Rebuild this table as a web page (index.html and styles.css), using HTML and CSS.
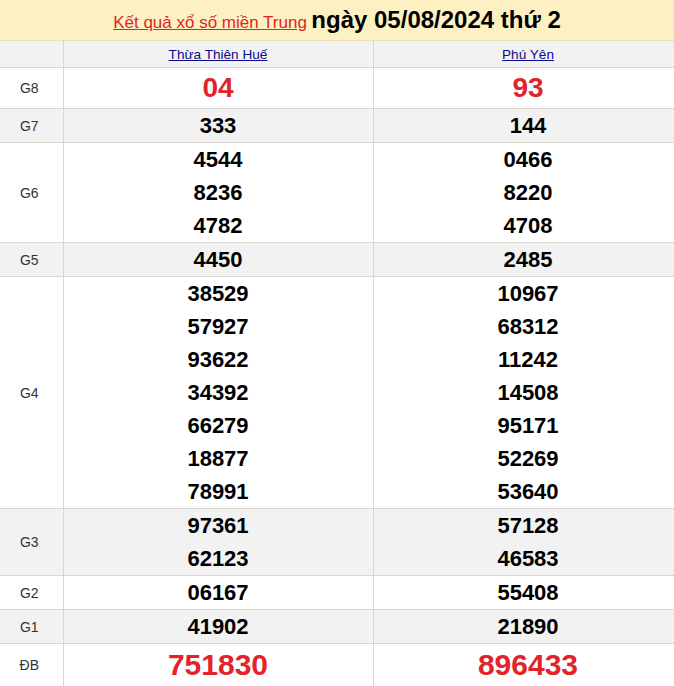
FILE: index.html
```html
<!DOCTYPE html>
<html lang="vi">
<head>
<meta charset="utf-8">
<title>Kết quả xổ số miền Trung</title>
<link rel="stylesheet" href="styles.css">
</head>
<body>
<div class="wrap">
  <div class="title">
    <a href="#" class="title-link">Kết quả xổ số miền Trung</a> <span class="title-date">ngày 05/08/2024 thứ 2</span>
  </div>
  <table class="kq">
    <colgroup>
      <col class="c-label">
      <col class="c-prov">
      <col class="c-prov">
    </colgroup>
    <thead>
      <tr class="head">
        <th></th>
        <th><a href="#">Thừa Thiên Huế</a></th>
        <th><a href="#">Phú Yên</a></th>
      </tr>
    </thead>
    <tbody>
      <tr class="g8">
        <td class="lbl">G8</td>
        <td><div class="n big red">04</div></td>
        <td><div class="n big red">93</div></td>
      </tr>
      <tr class="alt">
        <td class="lbl">G7</td>
        <td><div class="n">333</div></td>
        <td><div class="n">144</div></td>
      </tr>
      <tr>
        <td class="lbl">G6</td>
        <td><div class="n">4544</div><div class="n">8236</div><div class="n">4782</div></td>
        <td><div class="n">0466</div><div class="n">8220</div><div class="n">4708</div></td>
      </tr>
      <tr class="alt">
        <td class="lbl">G5</td>
        <td><div class="n">4450</div></td>
        <td><div class="n">2485</div></td>
      </tr>
      <tr>
        <td class="lbl">G4</td>
        <td><div class="n">38529</div><div class="n">57927</div><div class="n">93622</div><div class="n">34392</div><div class="n">66279</div><div class="n">18877</div><div class="n">78991</div></td>
        <td><div class="n">10967</div><div class="n">68312</div><div class="n">11242</div><div class="n">14508</div><div class="n">95171</div><div class="n">52269</div><div class="n">53640</div></td>
      </tr>
      <tr class="alt">
        <td class="lbl">G3</td>
        <td><div class="n">97361</div><div class="n">62123</div></td>
        <td><div class="n">57128</div><div class="n">46583</div></td>
      </tr>
      <tr>
        <td class="lbl">G2</td>
        <td><div class="n">06167</div></td>
        <td><div class="n">55408</div></td>
      </tr>
      <tr class="alt">
        <td class="lbl">G1</td>
        <td><div class="n">41902</div></td>
        <td><div class="n">21890</div></td>
      </tr>
      <tr class="db">
        <td class="lbl">ĐB</td>
        <td><div class="n huge red">751830</div></td>
        <td><div class="n huge red">896433</div></td>
      </tr>
    </tbody>
  </table>
</div>
</body>
</html>
```

FILE: styles.css
```css
html, body {
  margin: 0;
  padding: 0;
  background: #ffffff;
  overflow: hidden;
}

body {
  font-family: "Liberation Sans", Arial, sans-serif;
  color: #000;
}

.wrap {
  width: 683px;
}

.title {
  width: 674px;
  height: 41px;
  background: #fdf1c4;
  border-bottom: 1px solid #eadfb8;
  box-sizing: border-box;
  text-align: center;
  line-height: 40px;
  white-space: nowrap;
}

.title-link {
  color: #e0251f;
  font-size: 17px;
  text-decoration: underline;
}

.title-date {
  font-size: 24px;
  font-weight: bold;
  color: #000;
}

.kq {
  width: 683px;
  border-collapse: collapse;
  table-layout: fixed;
}

.c-label {
  width: 63px;
}

.c-prov {
  width: 310px;
}

.kq th,
.kq td {
  border: 1px solid #d9d6d2;
  padding: 0;
  text-align: center;
  vertical-align: middle;
}

.kq tr > :first-child {
  border-left: none;
}

.head th {
  background: #f2f2f2;
  height: 26px;
  font-weight: normal;
  font-size: 13.6px;
  border-top: none;
}

.head a {
  color: #0c0c8a;
  text-decoration: underline;
}

.lbl {
  font-size: 14px;
  color: #333;
  padding-right: 4px;
}

.kq td.lbl {
  padding-right: 4px;
}

.alt td {
  background: #f2f2f2;
}

.n {
  font-size: 22px;
  font-weight: bold;
  line-height: 33px;
  height: 33px;
  color: #000;
}

.n.big {
  font-size: 28px;
  line-height: 40px;
  height: 40px;
}

.n.huge {
  font-size: 30px;
  line-height: 42px;
  height: 42px;
}

.red {
  color: #e2232a;
}
```
